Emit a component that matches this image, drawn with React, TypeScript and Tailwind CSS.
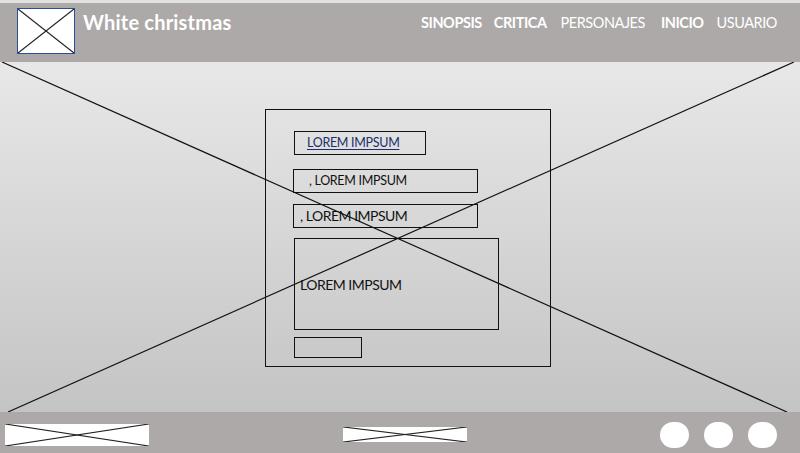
import React from 'react';

const font = { fontFamily: 'Lato, "Open Sans", sans-serif' };

function CrossBox({ className }: { className: string }) {
    return (
        <div className={`relative ${className}`}>
            <svg className="absolute inset-0 w-full h-full" viewBox="0 0 100 100" preserveAspectRatio="none">
                <line x1="0" y1="0" x2="100" y2="100" stroke="#222" strokeWidth="1.2" vectorEffect="non-scaling-stroke" />
                <line x1="0" y1="100" x2="100" y2="0" stroke="#222" strokeWidth="1.2" vectorEffect="non-scaling-stroke" />
            </svg>
        </div>
    );
}

export default function App() {
    const nav = [
        { label: 'SINOPSIS', bold: true, gap: 'ml-0' },
        { label: 'CRITICA', bold: true, gap: 'ml-[12px]' },
        { label: 'PERSONAJES', bold: false, gap: 'ml-[14px]' },
        { label: 'INICIO', bold: true, gap: 'ml-[16px]' },
        { label: 'USUARIO', bold: false, gap: 'ml-[13px]' },
    ];

    return (
        <div className="w-[800px] h-[453px] flex flex-col overflow-hidden" style={font}>
            {/* top strip */}
            <div className="h-[3px] bg-[#e2e2e2]" />

            {/* Header */}
            <header className="h-[59px] bg-[#ada9a8] flex items-start pl-[17px] pt-[5px] pr-[23px]">
                <CrossBox className="w-[58px] h-[46px] bg-white border border-[#2d4e9c]" />
                <h1 className="ml-[8px] mt-[2px] text-[20px] leading-[24px] font-bold text-white tracking-[0.2px]">White christmas</h1>
                <nav className="ml-auto mt-[6px] flex">
                    {nav.map((n) => (
                        <span
                            key={n.label}
                            className={`${n.gap} text-[14.5px] leading-[18px] tracking-[-0.45px] text-white ${n.bold ? 'font-bold' : 'font-normal'}`}
                        >
                            {n.label}
                        </span>
                    ))}
                </nav>
            </header>

            {/* Main */}
            <main className="relative h-[350px] bg-gradient-to-b from-[#e8e8e8] to-[#c4c4c4]">
                <div className="ml-[265px] mt-[47px] w-[286px] h-[258px] border border-[#111] flex flex-col items-start pl-[27px] pt-[21px]">
                    <div className="ml-px w-[132px] h-[24px] border border-[#111] flex items-center pl-[12px]">
                        <span className="text-[12.5px] leading-none tracking-[-0.3px] text-[#1b2d6b] underline underline-offset-[2px]">LOREM IMPSUM</span>
                    </div>
                    <div className="mt-[14px] w-[185px] h-[24px] border border-[#111] flex items-center pl-[15px]">
                        <span className="text-[12.5px] leading-none tracking-[-0.3px] text-[#111]">, LOREM IMPSUM</span>
                    </div>
                    <div className="mt-[11px] w-[185px] h-[24px] border border-[#111] flex items-center pl-[6px]">
                        <span className="text-[14px] leading-none tracking-[-0.5px] text-[#111]">, LOREM IMPSUM</span>
                    </div>
                    <div className="mt-[10px] ml-px w-[205px] h-[92px] border border-[#111] pl-[5px] pt-[33px]">
                        <span className="text-[14px] leading-[18px] tracking-[-0.5px] text-[#111]">LOREM IMPSUM</span>
                    </div>
                    <button className="mt-[7px] ml-px w-[68px] h-[21px] border border-[#111]" />
                </div>

                {/* placeholder cross */}
                <svg className="absolute inset-0 w-full h-full pointer-events-none" viewBox="0 0 800 350" preserveAspectRatio="none">
                    <line x1="2" y1="0" x2="787" y2="350" stroke="#111" strokeWidth="1.2" />
                    <line x1="8" y1="350" x2="794" y2="0" stroke="#111" strokeWidth="1.2" />
                </svg>
            </main>

            {/* Footer */}
            <footer className="h-[41px] bg-[#ada9a8] flex items-start">
                <CrossBox className="ml-[5px] mt-[12px] w-[144px] h-[22px] bg-white" />
                <CrossBox className="ml-[194px] mt-[15px] w-[124px] h-[15px] bg-white" />
                <div className="ml-[193px] mt-[10px] flex items-center gap-[15px]">
                    <div className="w-[29px] h-[26px] rounded-full bg-white" />
                    <div className="w-[29px] h-[26px] rounded-full bg-white" />
                    <div className="w-[29px] h-[26px] rounded-full bg-white" />
                </div>
            </footer>
        </div>
    );
}
